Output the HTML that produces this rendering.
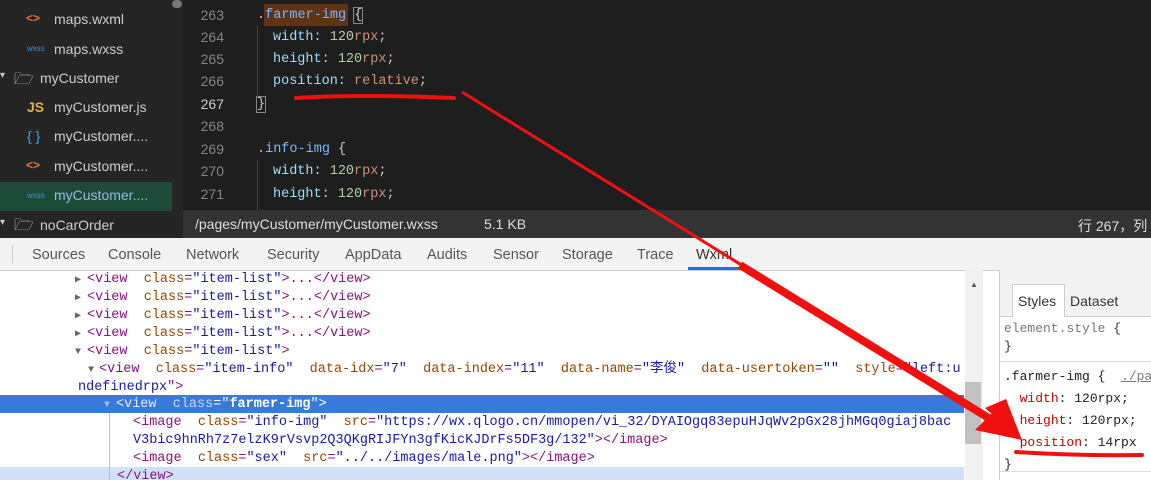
<!DOCTYPE html>
<html><head><meta charset="utf-8"><style>
body{margin:0;width:1151px;height:480px;overflow:hidden;position:relative;font-family:"Liberation Sans","Noto Sans CJK SC",sans-serif;background:#fff}
.a{position:absolute;white-space:pre}
.side{left:0;top:0;width:183px;height:238px;background:#252526}
.ed{left:183px;top:0;width:968px;height:210px;background:#1e1e1e}
.sb{left:183px;top:210px;width:968px;height:28px;background:#333;color:#ddd;font-size:14px}
.fi{font-size:14px;color:#ccc}
.mono{font-family:"Liberation Mono","DejaVu Sans Mono",monospace}
.ln{color:#858585;font-size:14px;width:40px;text-align:right;font-family:"Liberation Sans",sans-serif}
.code{font-size:13.5px;color:#9cdcfe}
.tabs{left:0;top:238px;width:1151px;height:32px;background:#f3f3f3;border-bottom:1px solid #ccc;font-size:14.5px;color:#555}
.el{font-size:13.5px;color:#881280;font-family:"Liberation Mono","DejaVu Sans Mono",monospace;line-height:18px}
.t{color:#881280}.at{color:#994500}.v{color:#1a1aa6}
.tr{color:#666;font-size:10px;display:inline-block;width:12px}
</style></head><body>
<div class="a side"></div>
<div class="a" style="left:172px;top:0;width:10px;height:8px;background:#777;border-radius:4px"></div>
<div class="a" style="left:0;top:182px;width:172px;height:29px;background:#1e4a3a"></div>
<div class="a fi" style="left:26px;top:11px;color:#e8733a;font-size:12px;font-weight:bold">&lt;&gt;</div><div class="a fi" style="left:54px;top:11px">maps.wxml</div>
<div class="a" style="left:27px;top:44px;color:#3b8fd6;font-size:8px">wxss</div><div class="a fi" style="left:54px;top:41px">maps.wxss</div>
<div class="a fi" style="left:0;top:70px;font-size:10px">▾</div><div class="a fi" style="left:14px;top:68px;font-size:16px">🗁</div><div class="a fi" style="left:40px;top:70px">myCustomer</div>
<div class="a fi" style="left:27px;top:99px;color:#e3b341;font-weight:bold">JS</div><div class="a fi" style="left:54px;top:99px">myCustomer.js</div>
<div class="a fi" style="left:27px;top:128px;color:#3ea6f0">{ }</div><div class="a fi" style="left:54px;top:128px">myCustomer....</div>
<div class="a fi" style="left:26px;top:158px;color:#e8733a;font-size:12px;font-weight:bold">&lt;&gt;</div><div class="a fi" style="left:54px;top:158px">myCustomer....</div>
<div class="a" style="left:27px;top:191px;color:#3b8fd6;font-size:8px">wxss</div><div class="a fi" style="left:54px;top:187px;color:#9bd">myCustomer....</div>
<div class="a fi" style="left:0;top:217px;font-size:10px">▾</div><div class="a fi" style="left:14px;top:214px;font-size:16px">🗁</div><div class="a fi" style="left:40px;top:217px">noCarOrder</div>
<div class="a ed"></div>
<div class="a ln" style="left:184px;top:7px">263</div>
<div class="a ln" style="left:184px;top:29px">264</div>
<div class="a ln" style="left:184px;top:51px">265</div>
<div class="a ln" style="left:184px;top:73px">266</div>
<div class="a ln" style="left:184px;top:96px;color:#ccc">267</div>
<div class="a ln" style="left:184px;top:118px">268</div>
<div class="a ln" style="left:184px;top:141px">269</div>
<div class="a ln" style="left:184px;top:163px">270</div>
<div class="a ln" style="left:184px;top:186px">271</div>
<div class="a" style="left:264px;top:4px;width:84px;height:22px;background:#613214"></div>
<div class="a code mono" style="left:257px;top:8px;color:#d7ba7d">.<span style="color:#79b8ff">farmer-img</span> <span style="color:#ccc;outline:1px solid #888">{</span></div>
<div class="a code mono" style="left:273px;top:30px">width: <span style="color:#b5cea8">120</span><span style="color:#ce9178">rpx</span><span style="color:#ccc">;</span></div>
<div class="a code mono" style="left:273px;top:52px">height: <span style="color:#b5cea8">120</span><span style="color:#ce9178">rpx</span><span style="color:#ccc">;</span></div>
<div class="a code mono" style="left:273px;top:74px">position: <span style="color:#ce9178">relative</span><span style="color:#ccc">;</span></div>
<div class="a code mono" style="left:257px;top:97px;color:#ccc;outline:1px solid #888">}</div>
<div class="a code mono" style="left:257px;top:142px;color:#d7ba7d">.<span style="color:#79b8ff">info-img</span> <span style="color:#ccc">{</span></div>
<div class="a code mono" style="left:273px;top:164px">width: <span style="color:#b5cea8">120</span><span style="color:#ce9178">rpx</span><span style="color:#ccc">;</span></div>
<div class="a code mono" style="left:273px;top:187px">height: <span style="color:#b5cea8">120</span><span style="color:#ce9178">rpx</span><span style="color:#ccc">;</span></div>
<div class="a" style="left:257px;top:26px;width:1px;height:72px;background:#444"></div>
<div class="a" style="left:257px;top:160px;width:1px;height:50px;background:#444"></div>
<div class="a sb"><span class="a" style="left:12px;top:6px">/pages/myCustomer/myCustomer.wxss</span><span class="a" style="left:301px;top:6px">5.1 KB</span><span class="a" style="left:895px;top:6px">行 267，列</span></div>
<div class="a tabs"><div class="a" style="left:12px;top:7px;width:1px;height:18px;background:#ccc"></div>
<span class="a" style="left:32px;top:9px">Sources</span><span class="a" style="left:108px;top:9px">Console</span><span class="a" style="left:186px;top:9px">Network</span><span class="a" style="left:267px;top:9px">Security</span><span class="a" style="left:345px;top:9px">AppData</span><span class="a" style="left:427px;top:9px">Audits</span><span class="a" style="left:493px;top:9px">Sensor</span><span class="a" style="left:562px;top:9px">Storage</span><span class="a" style="left:637px;top:9px">Trace</span><span class="a" style="left:696px;top:9px;color:#333">Wxml</span><div class="a" style="left:688px;top:29px;width:52px;height:3px;background:#1a73e8"></div></div>
<div class="a" style="left:0;top:395px;width:964px;height:18px;background:#3879d9"></div>
<div class="a" style="left:0;top:467px;width:964px;height:13px;background:#cfe0f7"></div>
<div class="a" style="left:109px;top:413px;width:1px;height:67px;background:#a8c4ee"></div>
<div class="a el" style="left:75px;top:271px"><span class="tr">▶</span><span class="t">&lt;view</span>  <span class="at">class</span>=<span class="v">"item-list"</span>&gt;...&lt;/view&gt;</div>
<div class="a el" style="left:75px;top:289px"><span class="tr">▶</span><span class="t">&lt;view</span>  <span class="at">class</span>=<span class="v">"item-list"</span>&gt;...&lt;/view&gt;</div>
<div class="a el" style="left:75px;top:307px"><span class="tr">▶</span><span class="t">&lt;view</span>  <span class="at">class</span>=<span class="v">"item-list"</span>&gt;...&lt;/view&gt;</div>
<div class="a el" style="left:75px;top:325px"><span class="tr">▶</span><span class="t">&lt;view</span>  <span class="at">class</span>=<span class="v">"item-list"</span>&gt;...&lt;/view&gt;</div>
<div class="a el" style="left:75px;top:343px"><span class="tr">▼</span><span class="t">&lt;view</span>  <span class="at">class</span>=<span class="v">"item-list"</span>&gt;</div>
<div class="a el" style="left:88px;top:361px"><span class="tr" style="width:11px">▼</span>&lt;view  <span class="at">class</span>=<span class="v">"item-info"</span>  <span class="at">data-idx</span>=<span class="v">"7"</span>  <span class="at">data-index</span>=<span class="v">"11"</span>  <span class="at">data-name</span>=<span class="v">"李俊"</span>  <span class="at">data-usertoken</span>=<span class="v">""</span>  <span class="at">style</span>=<span class="v">"left:u</span></div>
<div class="a el" style="left:78px;top:379px"><span class="v">ndefinedrpx</span>"&gt;</div>
<div class="a el" style="left:104px;top:396px;color:#fff"><span class="tr" style="color:#9bbcf0">▼</span><span style="color:#e6eefc">&lt;view</span>  <span style="color:#c9d8f3">class</span>="<b>farmer-img</b>"&gt;</div>
<div class="a el" style="left:133px;top:414px">&lt;image  <span class="at">class</span>=<span class="v">"info-img"</span>  <span class="at">src</span>=<span class="v">"https://wx.qlogo.cn/mmopen/vi_32/DYAIOgq83epuHJqWv2pGx28jhMGq0giaj8bac</span></div>
<div class="a el" style="left:133px;top:432px"><span class="v">V3bic9hnRh7z7elzK9rVsvp2Q3QKgRIJFYn3gfKicKJDrFs5DF3g/132"</span>&gt;&lt;/image&gt;</div>
<div class="a el" style="left:133px;top:450px">&lt;image  <span class="at">class</span>=<span class="v">"sex"</span>  <span class="at">src</span>=<span class="v">"../../images/male.png"</span>&gt;&lt;/image&gt;</div>
<div class="a el" style="left:117px;top:468px">&lt;/view&gt;</div>
<div class="a" style="left:965px;top:270px;width:18px;height:210px;background:#f1f1f1"></div>
<div class="a" style="left:970px;top:280px;color:#555;font-size:8px">▲</div>
<div class="a" style="left:965px;top:382px;width:16px;height:62px;background:#c1c1c1"></div>
<div class="a" style="left:999px;top:270px;width:152px;height:210px;background:#fff;border-left:1px solid #ccc"></div>
<div class="a" style="left:1000px;top:270px;width:151px;height:46px;background:#f3f3f3;border-bottom:1px solid #ccc"></div>
<div class="a" style="left:1012px;top:284px;width:51px;height:32px;background:#fff;border:1px solid #ccc;border-bottom:none"></div>
<div class="a" style="left:1018px;top:293px;font-size:14px;color:#333">Styles</div>
<div class="a" style="left:1070px;top:293px;font-size:14px;color:#333">Dataset</div>
<div class="a mono" style="left:1004px;top:320px;font-size:13px;line-height:18px;color:#333"><span style="color:#777">element.style</span> {
}</div>
<div class="a" style="left:1000px;top:361px;width:151px;height:1px;background:#ddd"></div>
<div class="a mono" style="left:1004px;top:366px;font-size:13px;line-height:22px;color:#222">.farmer-img {  <u style="color:#777">./pa</u>
  <span style="color:#c80000">width</span>: 120rpx;
  <span style="color:#c80000">height</span>: 120rpx;
  <span style="color:#c80000">position</span>: 14rpx
}</div>
<div class="a" style="left:1000px;top:471px;width:151px;height:1px;background:#ddd"></div>
<svg class="a" style="left:0;top:0" width="1151" height="480">
<path d="M296 98 Q360 94 454 98" stroke="#f01010" stroke-width="4" fill="none" stroke-linecap="round"/>
<path d="M1016 452 Q1080 456 1142 455" stroke="#f01010" stroke-width="4" fill="none" stroke-linecap="round"/>
<line x1="462" y1="92" x2="1000" y2="425" stroke="#f01010" stroke-width="3"/>
<line x1="740" y1="265" x2="1000" y2="425" stroke="#f01010" stroke-width="8"/>
<polygon points="1022,440 985,408 1006,399" fill="#f01010"/>
<polygon points="1022,440 975,430 995,410" fill="#f01010"/>
</svg>
</body></html>
